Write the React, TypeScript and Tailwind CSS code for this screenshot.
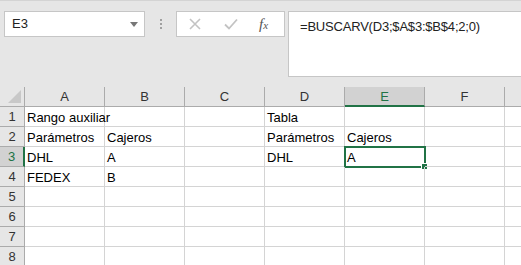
const cols = ['A', 'B', 'C', 'D', 'E', 'F', 'G']

const data: Record<string, string> = {
  A1: 'Rango auxiliar',
  A2: 'Parámetros',
  B2: 'Cajeros',
  A3: 'DHL',
  B3: 'A',
  A4: 'FEDEX',
  B4: 'B',
  D1: 'Tabla',
  D2: 'Parámetros',
  E2: 'Cajeros',
  D3: 'DHL',
  E3: 'A',
}

function FormulaBar() {
  return (
    <div className="flex h-[87px] items-start border-t border-[#d4d4d4] bg-[#e6e6e6] pl-[4px] pt-[10px]">
      <div className="relative flex h-[26px] w-[141px] items-center border border-[#c6c6c6] bg-white pl-[7px] text-[13px] text-[#222]">
        E3
        <span className="absolute right-[6px] top-[10px] h-0 w-0 border-x-[4px] border-t-[5px] border-x-transparent border-t-[#777]" />
      </div>
      <div className="flex h-[26px] w-[31px] flex-col items-center justify-center gap-[2px]">
        <span className="size-[2px] bg-[#a0a0a0]" />
        <span className="size-[2px] bg-[#a0a0a0]" />
        <span className="size-[2px] bg-[#a0a0a0]" />
      </div>
      <div className="flex h-[26px] w-[109px] items-center border border-[#c6c6c6] bg-white">
        <svg width="12" height="12" viewBox="0 0 12 12" className="ml-[12px]">
          <path d="M1 1L11 11M11 1L1 11" stroke="#c3c3c3" strokeWidth="1.6" />
        </svg>
        <svg width="14" height="12" viewBox="0 0 14 12" className="ml-[23px]">
          <path d="M1 6.5L5 10.5L13 1.5" stroke="#c3c3c3" strokeWidth="1.8" fill="none" />
        </svg>
        <span className="ml-[21px] font-['Liberation_Serif',serif] text-[15px] italic text-[#555]">
          f<span className="text-[11px]">x</span>
        </span>
      </div>
      <div className="ml-[3px] h-[66px] flex-1 border border-[#c6c6c6] border-r-0 bg-white pl-[11px] pt-[5px] text-[13px] tracking-[-0.2px] text-[#222]">
        =BUSCARV(D3;$A$3:$B$4;2;0)
      </div>
    </div>
  )
}

export default function App() {
  const rows = [1, 2, 3, 4, 5, 6, 7, 8]
  return (
    <div className="h-[265px] w-[521px] overflow-hidden bg-white font-['Liberation_Sans',Arial,sans-serif]">
      <FormulaBar />
      <div className="grid grid-cols-[25px_repeat(7,80px)] grid-rows-[20px_repeat(8,20px)]">
        <div className="relative border-b border-r border-[#ababab] bg-[#e6e6e6]">
          <span className="absolute bottom-[3px] right-[3px] h-0 w-0 border-b-[13px] border-l-[13px] border-b-[#c8c8c8] border-l-transparent" />
        </div>
        {cols.map((c) => (
          <div
            key={c}
            className={
              c === 'E'
                ? 'flex items-center justify-center border-b-2 border-r border-b-[#217346] border-r-[#ababab] bg-[#d2d2d2] pt-[1px] text-[13px] text-[#217346]'
                : 'flex items-center justify-center border-b border-r border-[#ababab] bg-[#e6e6e6] text-[13px] text-[#333]'
            }
          >
            {c === 'G' ? '' : c}
          </div>
        ))}
        {rows.map((r) => (
          <Row key={r} r={r} />
        ))}
      </div>
    </div>
  )
}

function Row({ r }: { r: number }) {
  const sel = r === 3
  return (
    <>
      <div
        className={
          sel
            ? 'flex items-center justify-center border-b border-r-2 border-b-[#ababab] border-r-[#217346] bg-[#d2d2d2] text-[13px] text-[#217346]'
            : 'flex items-center justify-center border-b border-r border-[#ababab] bg-[#e6e6e6] text-[13px] text-[#333]'
        }
      >
        {r}
      </div>
      {cols.map((c) => {
        const id = `${c}${r}`
        const active = id === 'E3'
        return (
          <div
            key={id}
            className="relative flex items-center overflow-visible whitespace-nowrap border-b border-r border-[#d4d4d4] pl-[2px] pt-[2px] text-[13px] text-black"
          >
            {data[id]}
            {active && (
              <>
                <span className="absolute -left-[1px] -top-[1px] h-[22px] w-[82px] border-2 border-[#217346]" />
                <span className="absolute -bottom-[4px] -right-[4px] size-[7px] border border-white bg-[#217346]" />
              </>
            )}
          </div>
        )
      })}
    </>
  )
}
